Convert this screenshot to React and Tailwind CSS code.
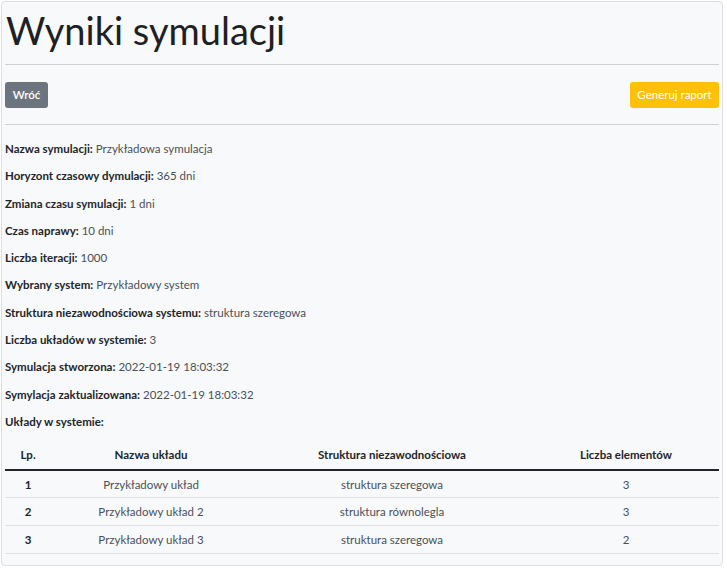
const DETAILS = [
  ['Nazwa symulacji:', 'Przykładowa symulacja'],
  ['Horyzont czasowy dymulacji:', '365 dni'],
  ['Zmiana czasu symulacji:', '1 dni'],
  ['Czas naprawy:', '10 dni'],
  ['Liczba iteracji:', '1000'],
  ['Wybrany system:', 'Przykładowy system'],
  ['Struktura niezawodnościowa systemu:', 'struktura szeregowa'],
  ['Liczba układów w systemie:', '3'],
  ['Symulacja stworzona:', '2022-01-19 18:03:32'],
  ['Symylacja zaktualizowana:', '2022-01-19 18:03:32'],
]

const UKLADY = [
  { lp: 1, nazwa: 'Przykładowy układ', struktura: 'struktura szeregowa', elementy: 3 },
  { lp: 2, nazwa: 'Przykładowy układ 2', struktura: 'struktura równolegla', elementy: 3 },
  { lp: 3, nazwa: 'Przykładowy układ 3', struktura: 'struktura szeregowa', elementy: 2 },
]

export default function App() {
  return (
    <div className="min-h-screen bg-white p-px font-['Lato','Liberation_Sans',sans-serif] text-[#212529]">
      <div className="w-[722px] h-[565px] border border-[#dcdfe3] rounded bg-[#f8f9fa] px-[3px]">
        {/* Nagłówek */}
        <h1 className="text-[38px] leading-[48px] font-normal pt-[4px] pl-[1px] text-[#1d2124]">
          Wyniki symulacji
        </h1>
        <hr className="mt-[10px] border-t border-[#cfd2d5]" />

        <div className="flex items-center justify-between mt-[17px]">
          <button className="h-[26px] w-[43px] rounded-[3px] bg-[#6c757d] text-white text-[11.5px] font-semibold">
            Wróć
          </button>
          <button className="h-[26px] w-[89px] rounded-[3px] bg-[#ffc107] text-white text-[11.5px]">
            Generuj raport
          </button>
        </div>
        <hr className="mt-[16px] border-t border-[#cfd2d5]" />

        {/* Szczegóły symulacji */}
        <div className="flex flex-col pt-[16px] text-[11.5px]">
          {DETAILS.map(([label, value]) => (
            <p key={label} className="h-[27.3px] leading-[16px]">
              <span className="font-bold">{label}</span>{' '}
              <span className="text-[#495057]">{value}</span>
            </p>
          ))}
          <p className="h-[27px] leading-[16px] font-bold">Układy w systemie:</p>
        </div>

        <table className="w-full text-[11.5px] text-center border-collapse">
          <thead>
            <tr className="h-[29px] border-b-2 border-[#212529]">
              <th className="w-[46px] font-bold">Lp.</th>
              <th className="w-[200px] font-bold">Nazwa układu</th>
              <th className="w-[282px] font-bold">Struktura niezawodnościowa</th>
              <th className="font-bold">Liczba elementów</th>
            </tr>
          </thead>
          <tbody>
            {UKLADY.map((u) => (
              <tr key={u.lp} className="h-[28px] border-b border-[#dee2e6]">
                <td className="font-bold">{u.lp}</td>
                <td className="text-[#495057]">{u.nazwa}</td>
                <td className="text-[#495057]">{u.struktura}</td>
                <td className="text-[#495057]">{u.elementy}</td>
              </tr>
            ))}
          </tbody>
        </table>
      </div>
    </div>
  )
}
